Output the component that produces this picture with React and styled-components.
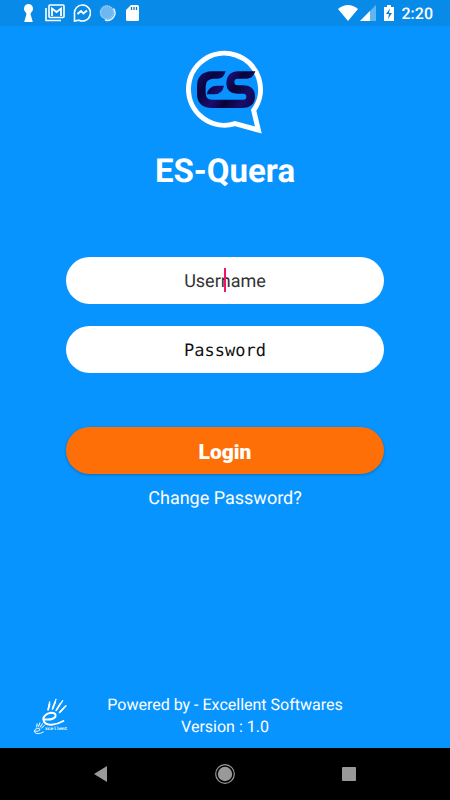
import { useState } from 'react'
import styled, { createGlobalStyle } from 'styled-components'

const GlobalStyle = createGlobalStyle`
  * {
    box-sizing: border-box;
  }
  body {
    margin: 0;
    font-family: Roboto, sans-serif;
    background: #0894ff;
    text-rendering: geometricPrecision;
  }
`

const Screen = styled.div`
  display: flex;
  flex-direction: column;
  min-height: 100vh;
  background: #0894ff;
  color: #fff;
`

const StatusBar = styled.header`
  display: flex;
  justify-content: space-between;
  align-items: center;
  height: 26px;
  padding: 0 17px 0 23px;
  background: #088ae8;
`

const StatusGroup = styled.div`
  display: flex;
  align-items: center;
  gap: ${({ $gap }) => $gap}px;

  svg {
    display: block;
  }
`

const Clock = styled.span`
  padding-top: 2px;
  font-size: 16px;
  font-weight: 500;
  line-height: 24px;
`

const Main = styled.main`
  flex: 1;
  display: flex;
  flex-direction: column;
  align-items: center;
  padding-top: 19px;
`

const Title = styled.h1`
  margin: 10px 0 63px;
  font-size: 33px;
  line-height: 44px;
  font-weight: 700;
`

const LoginForm = styled.form`
  display: flex;
  flex-direction: column;
  align-items: center;
  width: 100%;
  padding: 0 66px;
`

const Field = styled.label`
  position: relative;
  display: block;
  width: 100%;
  margin-bottom: 22px;
`

const Input = styled.input`
  display: block;
  width: 100%;
  height: 47px;
  padding: 2px 24px 0;
  border: 0;
  border-radius: 24px;
  outline: none;
  background: #fff;
  color: #222;
  caret-color: #f5126b;
  font-family: ${({ $mono }) => ($mono ? "'DejaVu Sans Mono', monospace" : 'Roboto, sans-serif')};
  font-size: ${({ $mono }) => ($mono ? 17 : 18)}px;
  text-align: center;
  text-rendering: inherit;

  &::placeholder {
    color: ${({ $mono }) => ($mono ? '#111' : '#333')};
    opacity: 1;
  }
`

const Caret = styled.span`
  position: absolute;
  top: 11px;
  left: calc(50% - 1px);
  width: 2px;
  height: 24px;
  background: #f5126b;
`

const LoginButton = styled.button`
  width: 100%;
  height: 47px;
  margin: 32px 0 12px;
  padding: 2px 0 0;
  border: 0;
  border-radius: 24px;
  background: #ff6f08;
  box-shadow: 0 1px 3px rgba(0, 40, 90, 0.35);
  color: #fff;
  font-family: Roboto, sans-serif;
  font-size: 21px;
  font-weight: 900;
`

const ChangeLink = styled.a`
  color: #fff;
  font-size: 18px;
  line-height: 26px;
  text-decoration: none;
`

const Footer = styled.footer`
  display: grid;
  grid-template-columns: 36px 1fr 36px;
  align-items: center;
  padding: 0 33px 10px;
`

const Credits = styled.p`
  margin: 0;
  font-size: 16px;
  line-height: 22px;
  text-align: center;
`

const NavBar = styled.nav`
  display: flex;
  justify-content: space-between;
  align-items: center;
  height: 52px;
  padding: 0 89px;
  background: #000;
`

const NavButton = styled.button`
  display: flex;
  align-items: center;
  justify-content: center;
  width: 24px;
  height: 24px;
  padding: 0;
  border: 0;
  background: none;
`

function Notifications() {
  return (
    <StatusGroup $gap={8}>
      <svg width="14" height="20" viewBox="0 0 14 20" fill="#fff">
        <path d="M5.500 1A4.600 4.600 0 0 0 2.500 9L3.500 11L1.200 19H9.800L7.500 11L8.500 9A4.600 4.600 0 0 0 5.500 1Z" />
      </svg>
      <svg width="20" height="18" viewBox="0 0 20 18" fill="none" stroke="#fff">
        <path d="M1 4V16.500H16" strokeWidth="1.6" />
        <rect x="4" y="1" width="15" height="12.500" rx="1" strokeWidth="1.6" />
        <path d="M7 12V4.500L11.500 8L16 4.500V12" strokeWidth="1.8" />
      </svg>
      <svg width="18" height="20" viewBox="0 0 18 20" fill="none" stroke="#fff">
        <path d="M1.500 18V11A8 8 0 1 1 6 17.200Z" strokeWidth="1.6" />
        <path d="M4.500 11L8 8L10.500 10.500L14 7.500" strokeWidth="2" />
      </svg>
      <svg width="18" height="18" viewBox="0 0 18 18" fill="none">
        <circle cx="8" cy="8.500" r="7.200" fill="#6db8f0" />
        <circle cx="8" cy="8.500" r="6.500" stroke="#9bd0f6" strokeWidth="1.5" strokeDasharray="1 1" />
        <path d="M14.500 4.500A7.500 7.500 0 0 1 6 16" stroke="#e9f5ff" strokeWidth="1.4" />
      </svg>
      <svg width="15" height="18" viewBox="0 0 15 18">
        <path d="M6 1H12.500Q14 1 14 2.500V15.500Q14 17 12.500 17H2.500Q1 17 1 15.500V6Z" fill="#fff" />
        <path d="M6.500 3V6M9 3V6M11.500 3V6" stroke="#0878d0" strokeWidth="1.3" />
      </svg>
    </StatusGroup>
  )
}

function SystemIcons() {
  return (
    <StatusGroup $gap={2}>
      <svg width="20" height="16" viewBox="0 0 20 16">
        <path d="M0 4Q10 -4 20 4L10 16Z" fill="#fff" />
      </svg>
      <svg width="16" height="16" viewBox="0 0 16 16">
        <path d="M0 16L16 0V16Z" fill="#60b5f4" />
        <path d="M0 16L10 6V16Z" fill="#fff" />
      </svg>
      <svg width="22" height="16" viewBox="0 0 22 16">
        <path d="M9 0H13V2H16V16H6V2H9Z" fill="#fff" />
        <path d="M12 3.500L8 9H11L10 14L14 8H11Z" fill="#087dd2" />
      </svg>
      <Clock>2:20</Clock>
    </StatusGroup>
  )
}

function Logo() {
  return (
    <svg width="90" height="95" viewBox="0 0 270 285" fill="none" role="img" aria-label="ES logo">
      <defs>
        <linearGradient id="navy" x1="50" y1="70" x2="225" y2="190" gradientUnits="userSpaceOnUse">
          <stop offset="0" stopColor="#1c1070" />
          <stop offset="0.25" stopColor="#090440" />
          <stop offset="0.45" stopColor="#1a0e70" />
          <stop offset="0.6" stopColor="#080338" />
          <stop offset="0.8" stopColor="#180e68" />
          <stop offset="1" stopColor="#0b0445" />
        </linearGradient>
      </defs>
      <path d="M221 196A108 108 0 1 0 165 236L235 255Z" stroke="#fff" strokeWidth="15" />
      <path
        d="M137 79Q131 101 115 101H99Q77 103 77 124V144Q77 164 96 164H190Q199 164 199 155Q199 146 190 146H172Q139 144 139 116Q139 81 174 79H226Q219 101 201 101H173Q163 101 163 111Q163 121 173 121H189Q225 122 225 155Q224 188 186 189H95Q51 187 51 146V122Q52 81 95 79Z"
        fill="url(#navy)"
      />
      <path d="M80 148Q86 122 111 122H132Q127 148 101 148Z" fill="url(#navy)" />
    </svg>
  )
}

// Small hand mark, used twice in the company logo
function Hand() {
  return (
    <g fill="none" stroke="#fff" strokeLinecap="round">
      <path d="M72 104Q95 107 105 97Q109 84 92 84Q70 88 69 104Q71 121 94 120Q112 119 129 109" strokeWidth="6" />
      <path d="M84 74L88 59M97 71L105 52M109 75L120 57M119 82L133 67" strokeWidth="5" />
      <path d="M83 76L88 52M96 74L107 44M107 78L127 48M117 84L137 63" strokeWidth="4" />
    </g>
  )
}

const Tagline = styled.text`
  font-family: 'Liberation Mono', monospace;
  font-size: 14px;
  font-weight: 700;
`

function CompanyLogo() {
  return (
    <svg width="36" height="40" viewBox="38 34 108 120" role="img" aria-label="Excellent">
      <Hand />
      <g transform="translate(11 93) scale(0.45)">
        <Hand />
      </g>
      <Tagline x="74" y="137" fill="#fff">xcellent</Tagline>
    </svg>
  )
}

export default function App() {
  const [username, setUsername] = useState('')
  const [password, setPassword] = useState('')

  return (
    <Screen>
      <GlobalStyle />
      <StatusBar>
        <Notifications />
        <SystemIcons />
      </StatusBar>
      <Main>
        <Logo />
        <Title>ES-Quera</Title>
        <LoginForm onSubmit={(e) => e.preventDefault()}>
          <Field>
            <Input
              type="text"
              aria-label="Username"
              placeholder="Username"
              value={username}
              onChange={(e) => setUsername(e.target.value)}
            />
            {username === '' && <Caret />}
          </Field>
          <Field>
            <Input
              $mono
              type="password"
              aria-label="Password"
              placeholder="Password"
              value={password}
              onChange={(e) => setPassword(e.target.value)}
            />
          </Field>
          <LoginButton type="submit">Login</LoginButton>
          <ChangeLink href="#change-password">Change Password?</ChangeLink>
        </LoginForm>
      </Main>
      <Footer>
        <CompanyLogo />
        <Credits>
          Powered by - Excellent Softwares
          <br />
          Version : 1.0
        </Credits>
      </Footer>
      <NavBar>
        <NavButton aria-label="Back">
          <svg width="14" height="16" viewBox="0 0 14 16">
            <path d="M0 8L13 0V16Z" fill="#999" />
          </svg>
        </NavButton>
        <NavButton aria-label="Home">
          <svg width="20" height="20" viewBox="0 0 20 20">
            <circle cx="10" cy="10" r="9.300" fill="none" stroke="#999" strokeWidth="1.2" />
            <circle cx="10" cy="10" r="7.200" fill="#999" />
          </svg>
        </NavButton>
        <NavButton aria-label="Recent apps">
          <svg width="14" height="14" viewBox="0 0 14 14">
            <rect width="14" height="14" rx="1" fill="#999" />
          </svg>
        </NavButton>
      </NavBar>
    </Screen>
  )
}
